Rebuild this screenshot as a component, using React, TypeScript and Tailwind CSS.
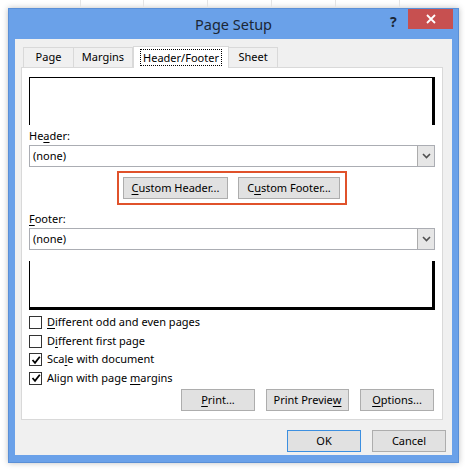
import React from "react";

const font = { fontFamily: '"Noto Sans", "Open Sans", sans-serif' };

function U({ children }: { children: React.ReactNode }) {
  return <span className="underline underline-offset-2">{children}</span>;
}

function Btn({ children, w, primary }: { children: React.ReactNode; w: string; primary?: boolean }) {
  return (
    <div
      className={`${w} h-[22px] flex items-center justify-center text-[11px] text-black bg-[#e1e1e1] border ${
        primary ? "border-[#3c8fe0]" : "border-[#adadad]"
      }`}
    >
      {children}
    </div>
  );
}

function Dropdown() {
  return (
    <div className="h-[22px] w-[406px] flex bg-white border border-[#abadb3]">
      <div className="flex-1 flex items-center pl-[3px] text-[11px] text-black">(none)</div>
      <div className="w-[17px] h-[20px] bg-[#e6e6e6] border-l border-[#acacac] flex items-center justify-center">
        <svg width="9" height="6" viewBox="0 0 9 6">
          <path d="M1 1 L4.5 4.5 L8 1" stroke="#505050" strokeWidth="1.6" fill="none" />
        </svg>
      </div>
    </div>
  );
}

function Check({ checked, children }: { checked?: boolean; children: React.ReactNode }) {
  return (
    <div className="h-[18.7px] flex items-center gap-[5px] text-[11px] text-black">
      <div className="w-[13px] h-[13px] bg-white border border-[#333333] flex items-center justify-center">
        {checked && (
          <svg width="10" height="10" viewBox="0 0 10 10">
            <path d="M1.5 5 L4 7.8 L8.8 1.8" stroke="#000" strokeWidth="1.8" fill="none" />
          </svg>
        )}
      </div>
      <span>{children}</span>
    </div>
  );
}

export default function App() {
  return (
    <div className="w-[465px] h-[475px] bg-white pt-[8px] pl-[8px] relative" style={font}>
      <div className="absolute top-0 left-0 w-[465px] h-[8px]">
        {[80, 143, 207, 271, 335, 399].map((x) => (
          <div key={x} className="absolute top-0 h-[8px] w-px bg-[#e4e4e4]" style={{ left: x }} />
        ))}
      </div>
      <div className="w-[451px] h-[455px] bg-[#6aa1e9] border border-[#5a8fd6] shadow-[0_0_6px_rgba(0,0,0,0.25)] flex flex-col">
        <div className="h-[30px] relative flex items-center justify-center">
          <span className="text-[14.5px] text-[#1b2735] mt-[1px]">Page Setup</span>
          <span className="absolute left-[381px] top-[2px] text-[14px] font-bold text-[#1b2735]">?</span>
          <div className="absolute right-[5px] top-0 w-[45px] h-[20px] bg-[#c75050] flex items-center justify-center">
            <svg width="10" height="10" viewBox="0 0 10 10">
              <path d="M1 1 L9 9 M9 1 L1 9" stroke="#fff" strokeWidth="1.8" />
            </svg>
          </div>
        </div>
        <div className="mx-[6px] h-[416px] bg-[#f0f0f0] flex flex-col">
          <div className="pl-[8px] pt-[7px] h-[28px] flex items-end">
            <div className="w-[51px] h-[20px] border border-b-0 border-[#d9d9d9] bg-[#f0f0f0] flex items-center justify-center text-[11px] text-black">
              Page
            </div>
            <div className="w-[59px] h-[20px] border border-b-0 border-l-0 border-[#d9d9d9] bg-[#f0f0f0] flex items-center justify-center text-[11px] text-black">
              Margins
            </div>
            <div className="w-[96px] h-[22px] border border-b-0 border-[#d9d9d9] bg-white flex items-center justify-center text-[11px] text-black relative z-10 -mb-px">
              <span className="border border-dotted border-black px-[2px] leading-[15px]">Header/Footer</span>
            </div>
            <div className="w-[49px] h-[20px] border border-b-0 border-l-0 border-[#d9d9d9] bg-[#f0f0f0] flex items-center justify-center text-[11px] text-black">
              Sheet
            </div>
          </div>
          <div className="ml-[6px] w-[422px] h-[353px] bg-white border border-[#d9d9d9] flex flex-col pl-[7px] pt-[9px]">
            <div className="w-[406px] h-[48px] border-t-[1.5px] border-l-[1.5px] border-r-[3px] border-black" />
            <div className="h-[20px] flex items-end text-[11px] text-black pb-[1px]">
              He<U>a</U>der:
            </div>
            <Dropdown />
            <div className="flex justify-center mt-[4px] pr-[8px]">
              <div className="w-[230px] h-[34px] border-2 border-[#e0522b] flex items-center justify-center gap-[10px]">
                <Btn w="w-[105px]">
                  <U>C</U>ustom Header...
                </Btn>
                <Btn w="w-[102px]">
                  C<U>u</U>stom Footer...
                </Btn>
              </div>
            </div>
            <div className="h-[23px] flex items-end text-[11px] text-black pb-[1px]">
              <U>F</U>ooter:
            </div>
            <Dropdown />
            <div className="mt-[11px] w-[406px] h-[49px] border-b-[3px] border-l-[1.5px] border-r-[3px] border-black" />
            <div className="mt-[3px] flex flex-col">
              <Check>
                <U>D</U>ifferent odd and even pages
              </Check>
              <Check>
                D<U>i</U>fferent first page
              </Check>
              <Check checked>
                Sca<U>l</U>e with document
              </Check>
              <Check checked>
                Align with page <U>m</U>argins
              </Check>
            </div>
            <div className="flex justify-end gap-[11px] pr-[8px] mt-[1px]">
              <Btn w="w-[74px]">
                <U>P</U>rint...
              </Btn>
              <Btn w="w-[83px]">
                Print Previe<U>w</U>
              </Btn>
              <Btn w="w-[74px]">
                <U>O</U>ptions...
              </Btn>
            </div>
          </div>
          <div className="flex justify-end gap-[11px] pr-[6px] mt-[10px]">
            <Btn w="w-[74px]" primary>
              OK
            </Btn>
            <Btn w="w-[74px]">Cancel</Btn>
          </div>
        </div>
      </div>
    </div>
  );
}
